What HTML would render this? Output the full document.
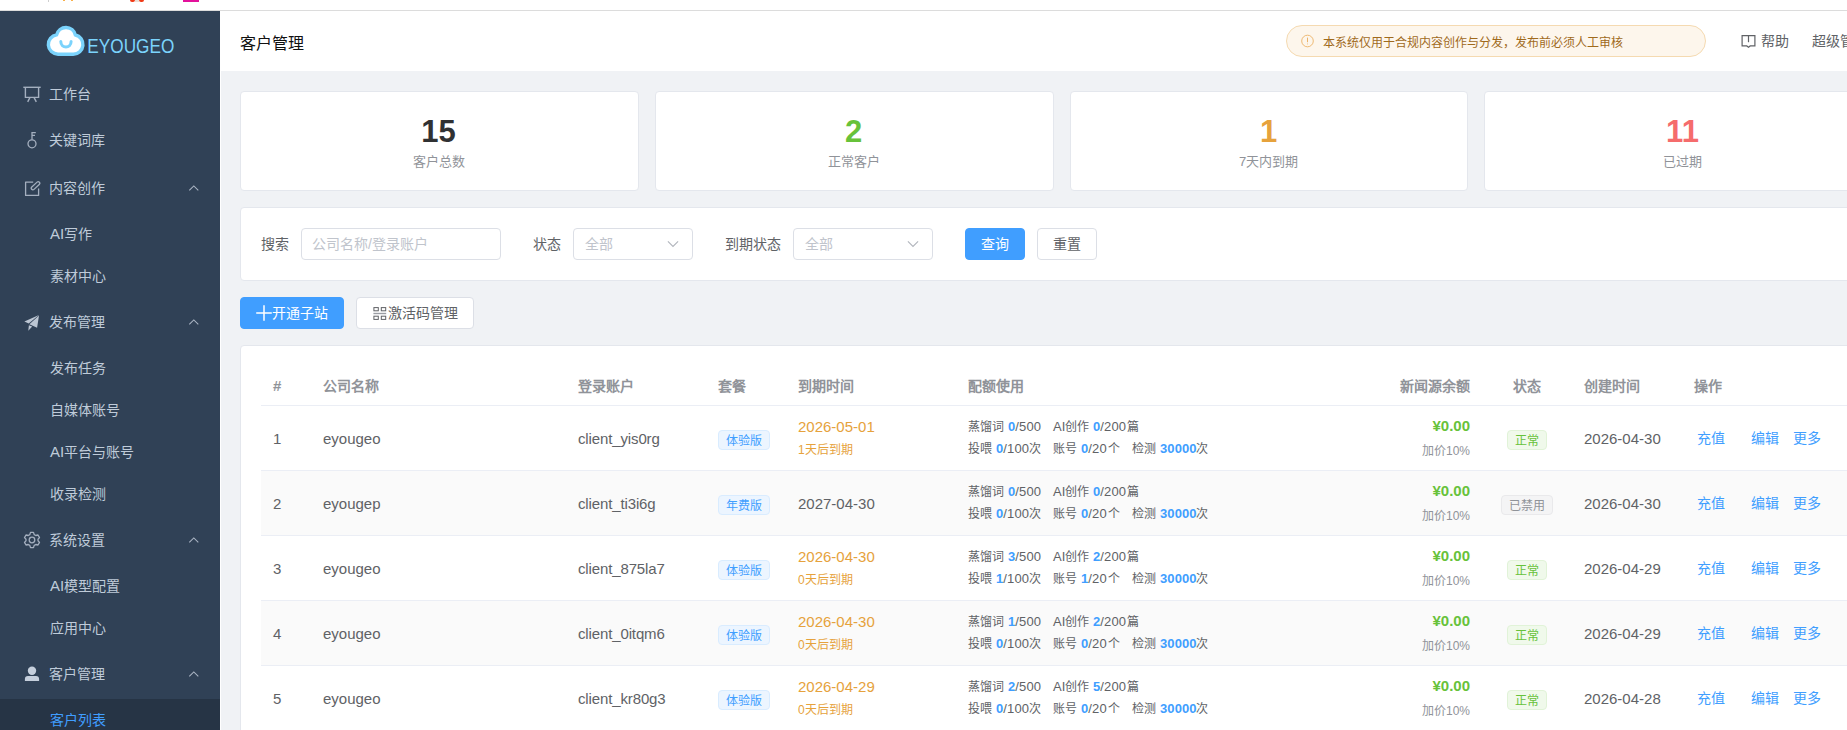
<!DOCTYPE html>
<html lang="zh-CN"><head><meta charset="utf-8"><title>客户管理</title>
<style>
*{box-sizing:border-box;margin:0;padding:0}
html,body{width:1847px;height:730px;overflow:hidden;background:#f0f2f5}
body{font-family:"Liberation Sans",sans-serif;font-size:14px;color:#606266;position:relative;-webkit-font-smoothing:antialiased}
.a{position:absolute;white-space:nowrap}
#top{left:0;top:0;width:1847px;height:11px;background:#fff;border-bottom:1px solid #dcdcdc}
#side{left:0;top:11px;width:220px;height:719px;background:#304156;overflow:hidden}
#side .gap{left:220px}
#sgap{left:220px;top:11px;width:1px;height:719px;background:#fff}
.mi{left:49px;height:20px;line-height:20px;font-size:14px;color:#bfcbd9}
.si{left:50px;height:20px;line-height:20px;font-size:14px;color:#bfcbd9}
.ic{position:absolute}
#hdr{left:220px;top:11px;width:1627px;height:60px;background:#fff}
.card{background:#fff;border:1px solid #e4e7ed;border-radius:4px}
.num{font-size:31px;font-weight:bold;line-height:32px;text-align:center;width:399px;left:0}
.lbl{font-size:13px;line-height:16px;color:#909399;text-align:center;width:399px;left:0}
.inp{border:1px solid #dcdfe6;border-radius:4px;background:#fff;height:32px;top:228px}
.ph{color:#c0c4cc;font-size:14px;line-height:30px;top:0}
.fl{font-size:14px;line-height:32px;top:228px;color:#606266}
.btn{height:32px;border-radius:4px;font-size:14px;line-height:30px;text-align:center;border:1px solid #dcdfe6;background:#fff;color:#606266}
.btn.p{background:#409eff;border-color:#409eff;color:#fff}
.th{font-size:14px;font-weight:bold;color:#909399;line-height:20px;top:376px}
.row{left:261px;width:1600px;height:65px;border-bottom:1px solid #ebeef5}
.row.z{background:#fafafa}
.c{font-size:14px;line-height:20px;color:#606266}
.co{font-size:15px}.lg{font-size:15px;letter-spacing:-.13px}.dt{font-size:15px}.n1{font-size:15px}.n1,.co,.lg{margin-top:.5px}
.q{font-size:12px;line-height:16px;color:#606266}
.q b{color:#409eff}
.qn{font-size:13px;letter-spacing:.1px}
.tag{height:20px;line-height:18px;padding-top:1px;font-size:12px;border-radius:4px;text-align:center;border:1px solid}
.tb{background:#ecf5ff;border-color:#d9ecff;color:#409eff}
.tg{background:#f0f9eb;border-color:#e1f3d8;color:#67c23a}
.ti{background:#f4f4f5;border-color:#e9e9eb;color:#909399}
.lk{color:#409eff;font-size:14px;line-height:20px}
</style></head>
<body>
<div id="top" class="a"></div>
<div class="a" style="left:48px;top:0;width:1px;height:2px;background:#cfcfcf"></div><div class="a" style="left:63px;top:0;width:2px;height:1px;background:#f8b04a"></div><div class="a" style="left:71px;top:0;width:2px;height:1px;background:#f8b04a"></div><div class="a" style="left:130px;top:0;width:5px;height:2px;background:#f03a17;border-radius:0 0 2px 2px"></div><div class="a" style="left:135px;top:0;width:4px;height:2px;background:#eadfd6"></div><div class="a" style="left:139px;top:0;width:5px;height:2px;background:#f03a17;border-radius:0 0 2px 2px"></div><div class="a" style="left:183px;top:0;width:16px;height:2px;background:#e3119b"></div>
<div id="side" class="a">
<svg class="ic" style="left:46px;top:14px" width="40" height="32" viewBox="0 0 40 32"><path d="M12 29.2 A9.7 9.7 0 0 1 10.63 9.9 A9.6 9.6 0 0 1 29.38 10.03 A9.7 9.7 0 0 1 27.3 29.2 Z" fill="#fff" stroke="#7bd3fc" stroke-width="3.4" stroke-linejoin="round"/><path d="M14.8 16.5 C14.8 23.7 25.1 23.7 25.1 16.5" fill="none" stroke="#7bd3fc" stroke-width="3" stroke-linecap="round"/></svg>
<svg class="ic" style="left:87px;top:21px" width="90" height="24" viewBox="0 0 90 24"><text x="0.3" y="20.5" font-family="Liberation Sans, sans-serif" font-size="20.6" fill="#7bd3fc" textLength="87" lengthAdjust="spacingAndGlyphs">EYOUGEO</text></svg>
<div class="a" style="left:0;top:688px;width:220px;height:42px;background:#263445"></div>
<svg class="ic" style="left:23px;top:75.1px" width="18" height="17" viewBox="0 0 18 17" fill="none" stroke="#a4afbf" stroke-width="1.4"><path d="M0.3 1.3 H17.7"/><path d="M2.4 1.3 V11.4 H15.6 V1.3"/><path d="M6.9 11.6 L4.7 15.9 M11.1 11.6 L13.3 15.9"/></svg>
<div class="a mi" style="top:73px">工作台</div>
<svg class="ic" style="left:27px;top:120.2px" width="12" height="18" viewBox="0 0 12 18" fill="none" stroke="#a4afbf" stroke-width="1.3"><circle cx="5" cy="12.8" r="4"/><path d="M5 8.8 V1 M5 1.6 H8.8 M5 4.4 H8"/></svg>
<div class="a mi" style="top:119px">关键词库</div>
<svg class="ic" style="left:24px;top:168.8px" width="17" height="17" viewBox="0 0 17 17" fill="none" stroke="#a4afbf" stroke-width="1.3" stroke-linejoin="round"><path d="M9.2 2.2 H1.6 V15.4 H14.6 V8.4"/><rect x="5.8" y="3.9" width="10.4" height="3.2" rx="1.6" transform="rotate(-43 10.9 5.5) translate(0.2 0.6)"/></svg>
<div class="a mi" style="top:167px">内容创作</div>
<svg class="ic" style="left:188px;top:173px" width="12" height="8" viewBox="0 0 12 8" fill="none" stroke="#aab4c3" stroke-width="1.1"><path d="M1.3 6.3 L5.8 1.9 L10.3 6.3"/></svg>
<div class="a si" style="top:213px"><span style="font-size:15px">AI</span>写作</div>
<div class="a si" style="top:255px">素材中心</div>
<svg class="ic" style="left:24px;top:303.0px" width="17" height="18" viewBox="0 0 17 18" fill="#bcc6d3"><path d="M15 1 L0.4 7.6 L4.7 9.4 Z"/><path d="M15 1.6 L5.4 10.2 L13.1 13.8 Z"/><path d="M4.9 11.2 L4.3 16.8 L8.2 12.6 Z"/></svg>
<div class="a mi" style="top:301px">发布管理</div>
<svg class="ic" style="left:188px;top:307px" width="12" height="8" viewBox="0 0 12 8" fill="none" stroke="#aab4c3" stroke-width="1.1"><path d="M1.3 6.3 L5.8 1.9 L10.3 6.3"/></svg>
<div class="a si" style="top:347px">发布任务</div>
<div class="a si" style="top:389px">自媒体账号</div>
<div class="a si" style="top:431px"><span style="font-size:15px">AI</span>平台与账号</div>
<div class="a si" style="top:473px">收录检测</div>
<svg class="ic" style="left:23px;top:520.0px" width="18" height="18" viewBox="0 0 18 18" fill="none" stroke="#a4afbf" stroke-width="1.3" stroke-linejoin="round"><circle cx="9" cy="9" r="2.8"/><path d="M7.5 1.4 H10.5 L11.2 3.6 L12.8 4.5 L15 4 L16.5 6.6 L15 8.3 V9.7 L16.5 11.4 L15 14 L12.8 13.5 L11.2 14.4 L10.5 16.6 H7.5 L6.8 14.4 L5.2 13.5 L3 14 L1.5 11.4 L3 9.7 V8.3 L1.5 6.6 L3 4 L5.2 4.5 L6.8 3.6 Z"/></svg>
<div class="a mi" style="top:519px">系统设置</div>
<svg class="ic" style="left:188px;top:525px" width="12" height="8" viewBox="0 0 12 8" fill="none" stroke="#aab4c3" stroke-width="1.1"><path d="M1.3 6.3 L5.8 1.9 L10.3 6.3"/></svg>
<div class="a si" style="top:565px"><span style="font-size:15px">AI</span>模型配置</div>
<div class="a si" style="top:607px">应用中心</div>
<svg class="ic" style="left:24px;top:655.0px" width="16" height="16" viewBox="0 0 16 16" fill="#c5cfdc"><circle cx="8" cy="4.7" r="4.2"/><path d="M0.9 15.1 V13 Q0.9 10 4 10 H12 Q15.1 10 15.1 13 V15.1 Z"/></svg>
<div class="a mi" style="top:653px">客户管理</div>
<svg class="ic" style="left:188px;top:659px" width="12" height="8" viewBox="0 0 12 8" fill="none" stroke="#aab4c3" stroke-width="1.1"><path d="M1.3 6.3 L5.8 1.9 L10.3 6.3"/></svg>
<div class="a si" style="top:699px;color:#409eff">客户列表</div>
</div>
<div id="sgap" class="a"></div>
<div id="hdr" class="a">
<div class="a" style="left:20px;top:22.5px;font-size:16px;line-height:20px;color:#111">客户管理</div>
<div class="a" style="left:1066px;top:14px;width:420px;height:32px;border-radius:16px;background:#fdf6ec;border:1px solid #f5dab1"></div>
<svg class="ic" style="left:1080px;top:23px" width="14" height="14" viewBox="0 0 14 14" fill="none" stroke="#ecb368" stroke-width="0.9"><circle cx="7.5" cy="7" r="5.8"/><path d="M7.5 3.6 V8.2 M7.5 9.6 V10.3" stroke-width="1"/></svg>
<div class="a" style="left:1103px;top:23.5px;font-size:12px;line-height:16px;color:#a06a1c">本系统仅用于合规内容创作与分发，发布前必须人工审核</div>
<svg class="ic" style="left:1521px;top:22.5px" width="16" height="16" viewBox="0 0 16 16" fill="none" stroke="#606266" stroke-width="1.2"><path d="M1.1 1.7 H13.9 V11.9 H9.2 L7.5 13.2 L5.8 11.9 H1.1 Z"/><path d="M7.5 1.7 V8.2"/></svg>
<div class="a" style="left:1541px;top:20px;font-size:14px;line-height:20px;color:#606266">帮助</div>
<div class="a" style="left:1592px;top:20px;font-size:14px;line-height:20px;color:#606266">超级管理员</div>
</div>
<div class="a card" style="left:240px;top:91px;width:399px;height:100px"><div class="a num" style="top:24px;left:-2px;color:#303133">15</div><div class="a lbl" style="top:62px;left:-2px">客户总数</div></div>
<div class="a card" style="left:655px;top:91px;width:399px;height:100px"><div class="a num" style="top:24px;left:-2px;color:#67c23a">2</div><div class="a lbl" style="top:62px;left:-2px">正常客户</div></div>
<div class="a card" style="left:1070px;top:91px;width:398px;height:100px"><div class="a num" style="top:24px;left:-2px;color:#e6a23c">1</div><div class="a lbl" style="top:62px;left:-2px">7天内到期</div></div>
<div class="a card" style="left:1484px;top:91px;width:399px;height:100px"><div class="a num" style="top:24px;left:-2px;color:#f56c6c">11</div><div class="a lbl" style="top:62px;left:-2px">已过期</div></div>
<div class="a card" style="left:240px;top:207px;width:1700px;height:74px"></div>
<div class="a fl" style="left:261px">搜索</div>
<div class="a inp" style="left:301px;width:200px"><div class="a ph" style="left:10px">公司名称/登录账户</div></div>
<div class="a fl" style="left:533px">状态</div>
<div class="a inp" style="left:573px;width:120px"><div class="a ph" style="left:11px">全部</div><svg class="ic" style="right:13px;top:11px" width="12" height="8" viewBox="0 0 12 8" fill="none" stroke="#b1b5bc" stroke-width="1.1"><path d="M0.9 1.4 L6 6.5 L11.1 1.4"/></svg></div>
<div class="a fl" style="left:725px">到期状态</div>
<div class="a inp" style="left:793px;width:140px"><div class="a ph" style="left:11px">全部</div><svg class="ic" style="right:13px;top:11px" width="12" height="8" viewBox="0 0 12 8" fill="none" stroke="#b1b5bc" stroke-width="1.1"><path d="M0.9 1.4 L6 6.5 L11.1 1.4"/></svg></div>
<div class="a btn p" style="left:965px;top:228px;width:60px">查询</div>
<div class="a btn" style="left:1037px;top:228px;width:60px">重置</div>
<div class="a btn p" style="left:240px;top:297px;width:104px"><svg class="ic" style="left:15px;top:7px" width="16" height="16" viewBox="0 0 16 16" stroke="#fff" stroke-width="1.5"><path d="M8 0.2 V15.8 M0.2 8 H15.8"/></svg><span class="a" style="left:31px;top:0">开通子站</span></div>
<div class="a btn" style="left:356px;top:297px;width:118px"><svg class="ic" style="left:16px;top:9px" width="14" height="13" viewBox="0 0 14 13" fill="none" stroke="#606266" stroke-width="1"><rect x="0.9" y="0.6" width="4.4" height="3.2"/><rect x="8.3" y="0.6" width="4.4" height="3.2"/><path d="M0.4 6.5 H13.2" stroke="#9a9da3" stroke-width="1.4"/><rect x="0.9" y="9.2" width="4.4" height="3.2"/><rect x="8.3" y="9.2" width="4.4" height="3.2"/></svg><span class="a" style="left:31px;top:0">激活码管理</span></div>
<div class="a card" style="left:240px;top:345px;width:1700px;height:500px"></div>
<div class="a th" style="left:273px"><span style="font-size:15px">#</span></div><div class="a th" style="left:323px">公司名称</div><div class="a th" style="left:578px">登录账户</div><div class="a th" style="left:718px">套餐</div><div class="a th" style="left:798px">到期时间</div><div class="a th" style="left:968px">配额使用</div><div class="a th" style="left:1584px">创建时间</div><div class="a th" style="left:1694px">操作</div><div class="a th" style="left:1370px;width:100px;text-align:right">新闻源余额</div><div class="a th" style="left:1482px;width:90px;text-align:center">状态</div>
<div class="a" style="left:261px;top:405px;width:1600px;height:1px;background:#ebeef5"></div>
<div class="a row" style="top:406px">
<div class="a c n1" style="left:12px;top:22px">1</div><div class="a c co" style="left:62px;top:22px">eyougeo</div><div class="a c lg" style="left:317px;top:22px">client_yis0rg</div><div class="a tag tb" style="left:457px;top:24px;width:52px">体验版</div><div class="a c dt" style="left:537px;top:11px;color:#e6a23c">2026-05-01</div><div class="a q" style="left:537px;top:36px;color:#e6a23c">1天后到期</div><div class="a q" style="left:707px;top:13px">蒸馏词</div><div class="a q qn" style="left:747px;top:13px"><b>0</b>/500</div><div class="a q" style="left:792px;top:13px"><span style="font-size:13px">AI</span>创作</div><div class="a q qn" style="left:832px;top:13px"><b>0</b>/200</div><div class="a q" style="left:866px;top:13px">篇</div><div class="a q" style="left:707px;top:35px">投喂</div><div class="a q qn" style="left:735px;top:35px"><b>0</b>/100</div><div class="a q" style="left:768px;top:35px">次</div><div class="a q" style="left:792px;top:35px">账号</div><div class="a q qn" style="left:820px;top:35px"><b>0</b>/20</div><div class="a q" style="left:847px;top:35px">个</div><div class="a q" style="left:871px;top:35px">检测</div><div class="a q qn" style="left:899px;top:35px"><b>30000</b></div><div class="a q" style="left:935px;top:35px">次</div>
<div class="a c" style="left:1109px;top:9.5px;width:100px;text-align:right;color:#67c23a;font-weight:bold;font-size:15px">¥0.00</div><div class="a q" style="left:1109px;top:37px;width:100px;text-align:right;color:#909399">加价10%</div><div class="a tag tg" style="left:1246px;top:24px;width:40px">正常</div><div class="a c dt" style="left:1323px;top:22.5px">2026-04-30</div><div class="a lk" style="left:1436px;top:21.75px">充值</div><div class="a lk" style="left:1490px;top:21.75px">编辑</div><div class="a lk" style="left:1532px;top:21.75px">更多</div>
</div>
<div class="a row z" style="top:471px">
<div class="a c n1" style="left:12px;top:22px">2</div><div class="a c co" style="left:62px;top:22px">eyougep</div><div class="a c lg" style="left:317px;top:22px">client_ti3i6g</div><div class="a tag tb" style="left:457px;top:24px;width:52px">年费版</div><div class="a c dt" style="left:537px;top:22.5px">2027-04-30</div><div class="a q" style="left:707px;top:13px">蒸馏词</div><div class="a q qn" style="left:747px;top:13px"><b>0</b>/500</div><div class="a q" style="left:792px;top:13px"><span style="font-size:13px">AI</span>创作</div><div class="a q qn" style="left:832px;top:13px"><b>0</b>/200</div><div class="a q" style="left:866px;top:13px">篇</div><div class="a q" style="left:707px;top:35px">投喂</div><div class="a q qn" style="left:735px;top:35px"><b>0</b>/100</div><div class="a q" style="left:768px;top:35px">次</div><div class="a q" style="left:792px;top:35px">账号</div><div class="a q qn" style="left:820px;top:35px"><b>0</b>/20</div><div class="a q" style="left:847px;top:35px">个</div><div class="a q" style="left:871px;top:35px">检测</div><div class="a q qn" style="left:899px;top:35px"><b>30000</b></div><div class="a q" style="left:935px;top:35px">次</div>
<div class="a c" style="left:1109px;top:9.5px;width:100px;text-align:right;color:#67c23a;font-weight:bold;font-size:15px">¥0.00</div><div class="a q" style="left:1109px;top:37px;width:100px;text-align:right;color:#909399">加价10%</div><div class="a tag ti" style="left:1240px;top:24px;width:52px">已禁用</div><div class="a c dt" style="left:1323px;top:22.5px">2026-04-30</div><div class="a lk" style="left:1436px;top:21.75px">充值</div><div class="a lk" style="left:1490px;top:21.75px">编辑</div><div class="a lk" style="left:1532px;top:21.75px">更多</div>
</div>
<div class="a row" style="top:536px">
<div class="a c n1" style="left:12px;top:22px">3</div><div class="a c co" style="left:62px;top:22px">eyougeo</div><div class="a c lg" style="left:317px;top:22px">client_875la7</div><div class="a tag tb" style="left:457px;top:24px;width:52px">体验版</div><div class="a c dt" style="left:537px;top:11px;color:#e6a23c">2026-04-30</div><div class="a q" style="left:537px;top:36px;color:#e6a23c">0天后到期</div><div class="a q" style="left:707px;top:13px">蒸馏词</div><div class="a q qn" style="left:747px;top:13px"><b>3</b>/500</div><div class="a q" style="left:792px;top:13px"><span style="font-size:13px">AI</span>创作</div><div class="a q qn" style="left:832px;top:13px"><b>2</b>/200</div><div class="a q" style="left:866px;top:13px">篇</div><div class="a q" style="left:707px;top:35px">投喂</div><div class="a q qn" style="left:735px;top:35px"><b>1</b>/100</div><div class="a q" style="left:768px;top:35px">次</div><div class="a q" style="left:792px;top:35px">账号</div><div class="a q qn" style="left:820px;top:35px"><b>1</b>/20</div><div class="a q" style="left:847px;top:35px">个</div><div class="a q" style="left:871px;top:35px">检测</div><div class="a q qn" style="left:899px;top:35px"><b>30000</b></div><div class="a q" style="left:935px;top:35px">次</div>
<div class="a c" style="left:1109px;top:9.5px;width:100px;text-align:right;color:#67c23a;font-weight:bold;font-size:15px">¥0.00</div><div class="a q" style="left:1109px;top:37px;width:100px;text-align:right;color:#909399">加价10%</div><div class="a tag tg" style="left:1246px;top:24px;width:40px">正常</div><div class="a c dt" style="left:1323px;top:22.5px">2026-04-29</div><div class="a lk" style="left:1436px;top:21.75px">充值</div><div class="a lk" style="left:1490px;top:21.75px">编辑</div><div class="a lk" style="left:1532px;top:21.75px">更多</div>
</div>
<div class="a row z" style="top:601px">
<div class="a c n1" style="left:12px;top:22px">4</div><div class="a c co" style="left:62px;top:22px">eyougeo</div><div class="a c lg" style="left:317px;top:22px">client_0itqm6</div><div class="a tag tb" style="left:457px;top:24px;width:52px">体验版</div><div class="a c dt" style="left:537px;top:11px;color:#e6a23c">2026-04-30</div><div class="a q" style="left:537px;top:36px;color:#e6a23c">0天后到期</div><div class="a q" style="left:707px;top:13px">蒸馏词</div><div class="a q qn" style="left:747px;top:13px"><b>1</b>/500</div><div class="a q" style="left:792px;top:13px"><span style="font-size:13px">AI</span>创作</div><div class="a q qn" style="left:832px;top:13px"><b>2</b>/200</div><div class="a q" style="left:866px;top:13px">篇</div><div class="a q" style="left:707px;top:35px">投喂</div><div class="a q qn" style="left:735px;top:35px"><b>0</b>/100</div><div class="a q" style="left:768px;top:35px">次</div><div class="a q" style="left:792px;top:35px">账号</div><div class="a q qn" style="left:820px;top:35px"><b>0</b>/20</div><div class="a q" style="left:847px;top:35px">个</div><div class="a q" style="left:871px;top:35px">检测</div><div class="a q qn" style="left:899px;top:35px"><b>30000</b></div><div class="a q" style="left:935px;top:35px">次</div>
<div class="a c" style="left:1109px;top:9.5px;width:100px;text-align:right;color:#67c23a;font-weight:bold;font-size:15px">¥0.00</div><div class="a q" style="left:1109px;top:37px;width:100px;text-align:right;color:#909399">加价10%</div><div class="a tag tg" style="left:1246px;top:24px;width:40px">正常</div><div class="a c dt" style="left:1323px;top:22.5px">2026-04-29</div><div class="a lk" style="left:1436px;top:21.75px">充值</div><div class="a lk" style="left:1490px;top:21.75px">编辑</div><div class="a lk" style="left:1532px;top:21.75px">更多</div>
</div>
<div class="a row" style="top:666px">
<div class="a c n1" style="left:12px;top:22px">5</div><div class="a c co" style="left:62px;top:22px">eyougeo</div><div class="a c lg" style="left:317px;top:22px">client_kr80g3</div><div class="a tag tb" style="left:457px;top:24px;width:52px">体验版</div><div class="a c dt" style="left:537px;top:11px;color:#e6a23c">2026-04-29</div><div class="a q" style="left:537px;top:36px;color:#e6a23c">0天后到期</div><div class="a q" style="left:707px;top:13px">蒸馏词</div><div class="a q qn" style="left:747px;top:13px"><b>2</b>/500</div><div class="a q" style="left:792px;top:13px"><span style="font-size:13px">AI</span>创作</div><div class="a q qn" style="left:832px;top:13px"><b>5</b>/200</div><div class="a q" style="left:866px;top:13px">篇</div><div class="a q" style="left:707px;top:35px">投喂</div><div class="a q qn" style="left:735px;top:35px"><b>0</b>/100</div><div class="a q" style="left:768px;top:35px">次</div><div class="a q" style="left:792px;top:35px">账号</div><div class="a q qn" style="left:820px;top:35px"><b>0</b>/20</div><div class="a q" style="left:847px;top:35px">个</div><div class="a q" style="left:871px;top:35px">检测</div><div class="a q qn" style="left:899px;top:35px"><b>30000</b></div><div class="a q" style="left:935px;top:35px">次</div>
<div class="a c" style="left:1109px;top:9.5px;width:100px;text-align:right;color:#67c23a;font-weight:bold;font-size:15px">¥0.00</div><div class="a q" style="left:1109px;top:37px;width:100px;text-align:right;color:#909399">加价10%</div><div class="a tag tg" style="left:1246px;top:24px;width:40px">正常</div><div class="a c dt" style="left:1323px;top:22.5px">2026-04-28</div><div class="a lk" style="left:1436px;top:21.75px">充值</div><div class="a lk" style="left:1490px;top:21.75px">编辑</div><div class="a lk" style="left:1532px;top:21.75px">更多</div>
</div>
</body></html>
